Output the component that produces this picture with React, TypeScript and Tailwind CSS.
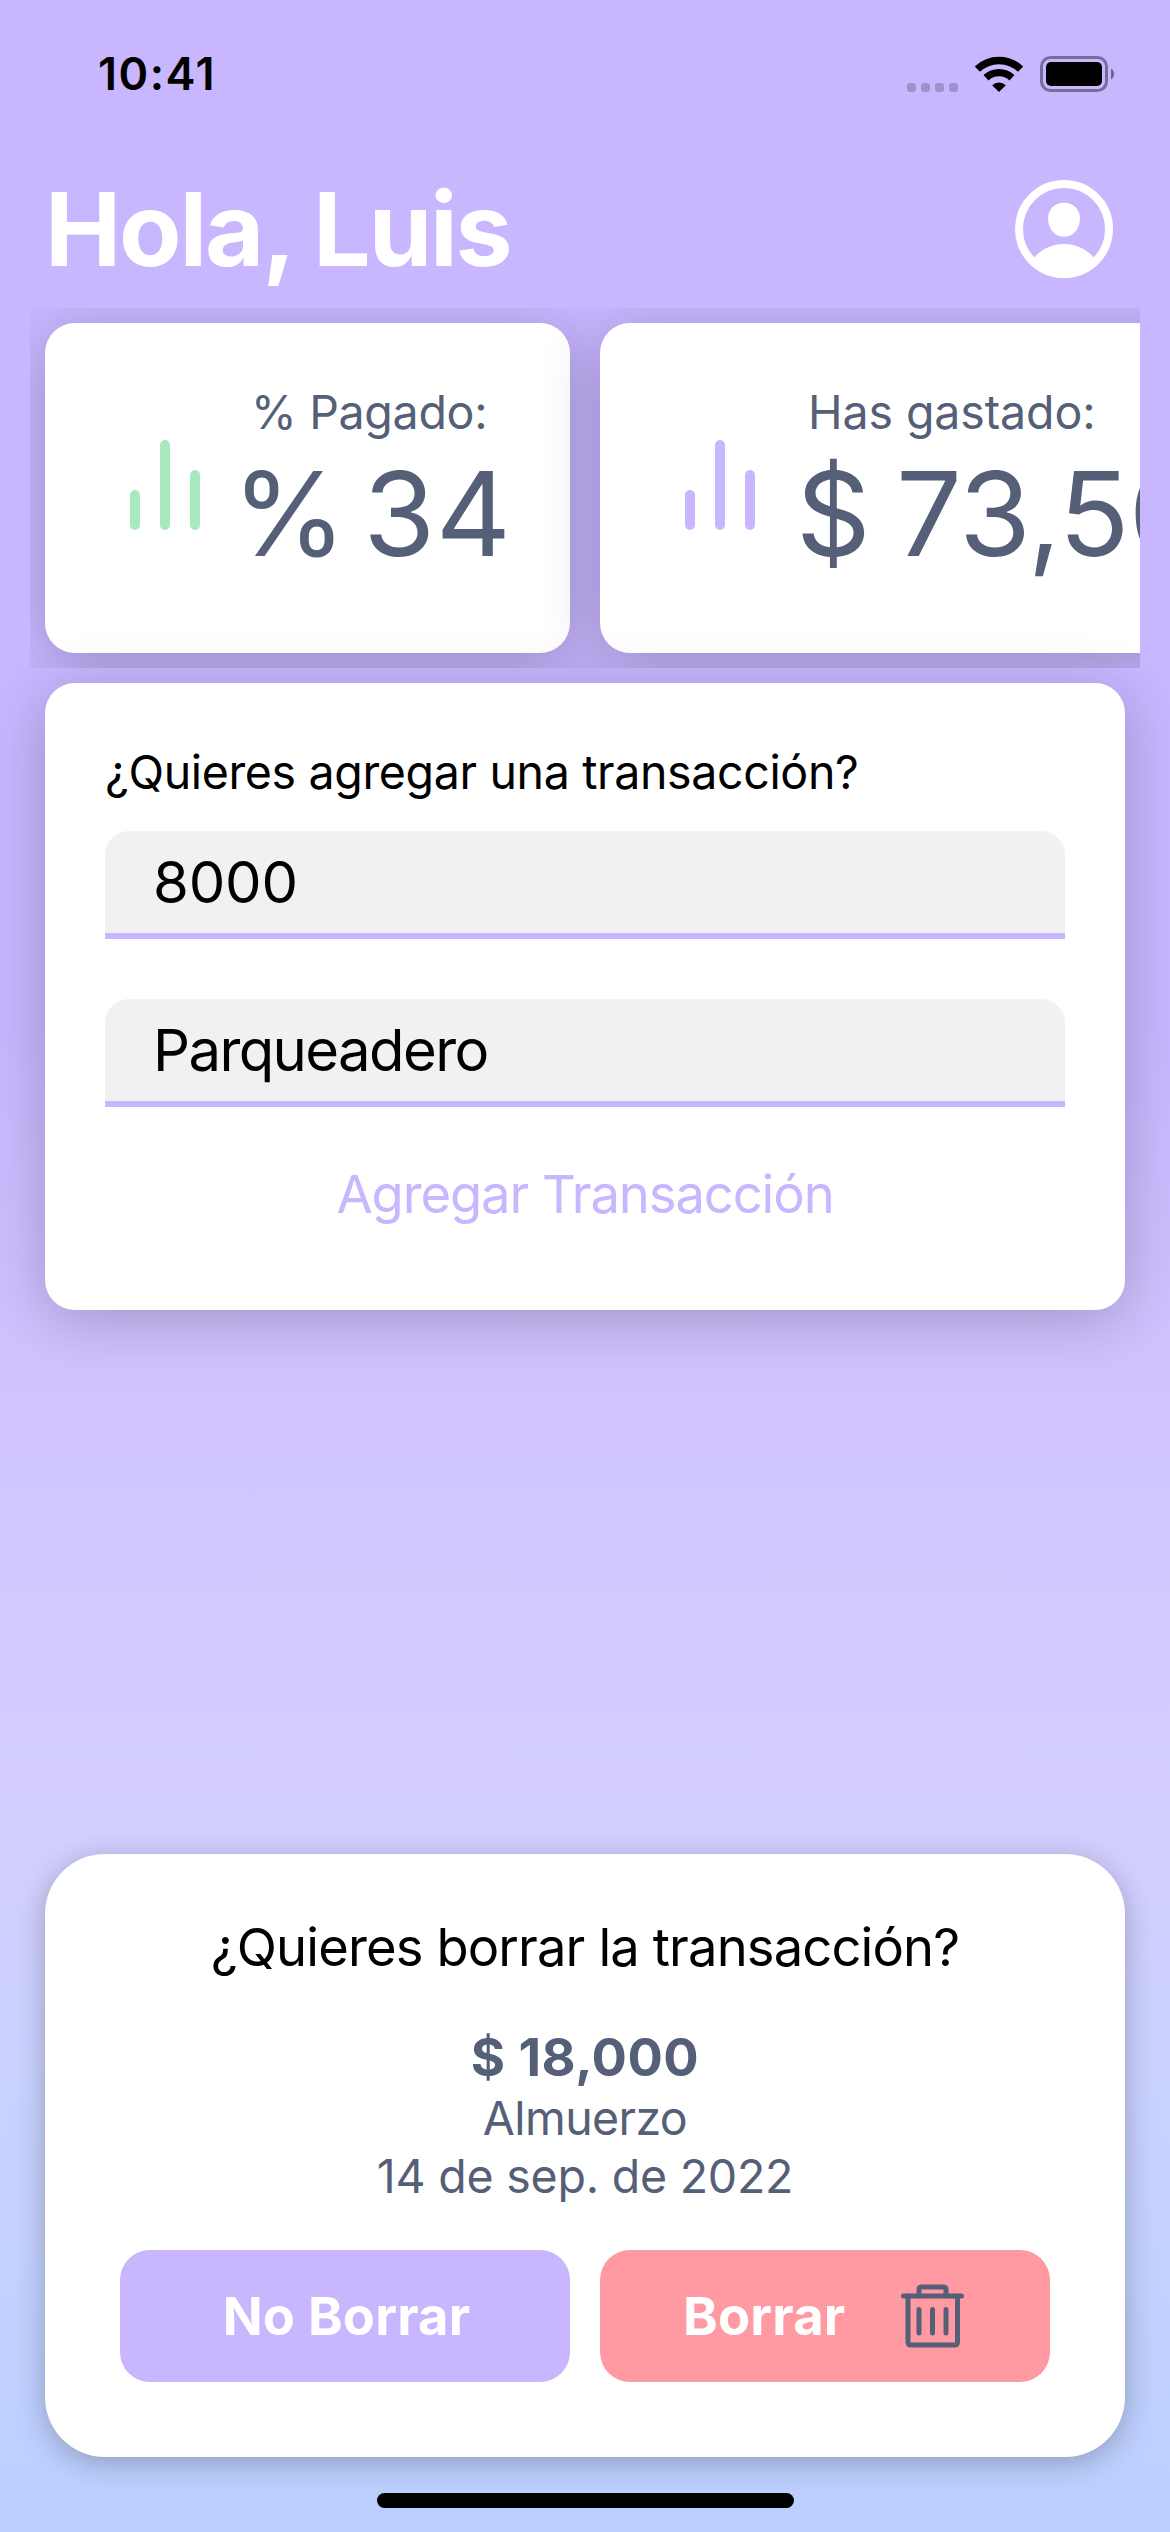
import type { ReactNode } from "react";

function StatusBar() {
  return (
    <div className="flex h-[148px] shrink-0 items-center justify-between pr-[55px] pl-[98px] text-black">
      <span className="text-[45px] font-semibold tracking-[1.5px]">10:41</span>
      <div className="flex items-center">
        <div className="mt-[26px] flex gap-[5px]">
          <span className="size-[9px] rounded-[3px] bg-black/20" />
          <span className="size-[9px] rounded-[3px] bg-black/20" />
          <span className="size-[9px] rounded-[3px] bg-black/20" />
          <span className="size-[9px] rounded-[3px] bg-black/20" />
        </div>
        <svg className="ml-[17px]" width="48" height="36" viewBox="0 0 48 36">
          <g fill="none" stroke="black" strokeWidth="7.4">
            <path d="M2.4 13.2 A31 31 0 0 1 45.6 13.2" />
            <path d="M11 21.8 A19 19 0 0 1 37 21.8" />
          </g>
          <path d="M24 36 L17.2 29.2 A9.6 9.6 0 0 1 30.8 29.2 Z" />
        </svg>
        <svg className="ml-[17px]" width="75" height="36" viewBox="0 0 75 36">
          <rect x="1.5" y="1.5" width="65" height="33" rx="9" fill="none" stroke="black" strokeOpacity="0.4" strokeWidth="3" />
          <rect x="6" y="6" width="56" height="24" rx="5" />
          <path d="M71 12.5 A6.5 6.5 0 0 1 71 23.5 Z" fillOpacity="0.45" />
        </svg>
      </div>
    </div>
  );
}

function AvatarIcon() {
  return (
    <svg width="98" height="98" viewBox="0 0 98 98" fill="white">
      <circle cx="49" cy="49" r="45" fill="none" stroke="white" strokeWidth="8" />
      <path d="M49 22.7c9.6 0 16 7 16 15.8C65 49 58 56.8 49 56.8S33 49 33 38.5C33 29.7 39.4 22.7 49 22.7Z" />
      <path d="M19.3 77.5C26.5 69 37 64 49 64S71.5 69 78.700 77.500C72 86.500 61 92 49 92S26 86.500 19.300 77.500Z" />
    </svg>
  );
}

function TrashIcon() {
  return (
    <svg width="63" height="64" viewBox="0 0 63 64" fill="none" stroke="#555f77" strokeWidth="5" strokeLinecap="round" strokeLinejoin="round">
      <path d="M2.5 12H60.5" />
      <path d="M18 12V5.5Q18 2.9 20.6 2.9H42.4Q45 2.9 45 5.5V12" />
      <path d="M7 12V58Q7 61 10 61H53.5Q56.5 61 56.5 58V12" />
      <path d="M18 25.5V49M31.500 25.500V49M45 25.500V49" />
    </svg>
  );
}

function BarsIcon({ className }: { className: string }) {
  return (
    <div className={`mt-[117px] ml-[85px] flex h-[90px] w-[70px] shrink-0 items-end justify-between ${className}`}>
      <span className="h-10 w-[10px] rounded-full bg-current" />
      <span className="h-[90px] w-[10px] rounded-full bg-current" />
      <span className="h-[60px] w-[10px] rounded-full bg-current" />
    </div>
  );
}

function StatCard({ className, label, children }: { className: string; label: ReactNode; children: ReactNode }) {
  return (
    <div className={`flex h-[330px] shrink-0 items-start rounded-[30px] bg-white shadow-[0_10px_60px_rgba(0,0,0,0.22)] ${className}`}>
      <BarsIcon className="" />
      <div className="mt-[61px] text-[#555f77]">
        <p className="h-14 text-[46.5px] leading-[56px]">{label}</p>
        <p className="mt-1 h-[140px] text-[116.5px] leading-[140px]">{children}</p>
      </div>
    </div>
  );
}

function Field({ value, className }: { value: string; className: string }) {
  return (
    <div className={`flex h-[108px] items-center rounded-t-[24px] border-b-[6px] border-[#c8b6ff] bg-[#f1f1f1] pl-12 text-[58px] ${className}`}>
      {value}
    </div>
  );
}

export default function App() {
  return (
    <div className="flex h-[2532px] w-[1170px] flex-col overflow-hidden bg-[linear-gradient(180deg,#c8b6ff_0px,#c8b6ff_1020px,#d0c1ff_1340px,#d2c9ff_1600px,#d3cfff_1830px,#cad2ff_2080px,#c1d1ff_2320px,#bbcfff_2532px)] font-['Inter',sans-serif] whitespace-nowrap">
      <StatusBar />
      <header className="flex h-[160px] shrink-0 items-center justify-between pt-[2px] pr-[57px] pl-[45px]">
        <h1 className="text-[102px] leading-none font-bold tracking-[-2.1px] text-white">Hola, Luis</h1>
        <AvatarIcon />
      </header>

      <section className="mx-[30px] flex h-[360px] shrink-0 gap-[30px] overflow-hidden p-[15px]">
        <StatCard className="w-[525px] text-[#a8e9bd]" label={<span className="ml-[51px] tracking-[-0.3px]">% Pagado:</span>}>
          <span className="ml-[32px] tracking-[-8px]">{"% "}</span>
          <span className="tracking-[0.5px]">34</span>
        </StatCard>
        <StatCard className="w-[760px] text-[#c8b6ff]" label={<span className="ml-[53px] tracking-[-0.1px]">Has gastado:</span>}>
          <span className="ml-[41px] tracking-[-0.8px] [word-spacing:-6px]">$ 73,500</span>
        </StatCard>
      </section>

      <section className="mx-[45px] mt-[15px] h-[627px] shrink-0 rounded-[30px] bg-white px-[60px] pt-[61px] text-black shadow-[0_10px_60px_rgba(0,0,0,0.22)]">
        <h2 className="h-14 text-[46.5px] leading-[56px] tracking-[-0.35px]">¿Quieres agregar una transacción?</h2>
        <Field value="8000" className="mt-[31px] tracking-[-0.2px]" />
        <Field value="Parqueadero" className="mt-[60px] tracking-[-1.6px]" />
        <button className="mt-[57px] block h-[60px] w-full text-center text-[52.5px] leading-[60px] tracking-[-1.08px] text-[#c8b6ff]">
          Agregar Transacción
        </button>
      </section>

      <section className="mx-[45px] mt-auto h-[603px] shrink-0 rounded-[60px] bg-white px-[75px] pt-[63px] text-center text-[#555f77] shadow-[0_6px_30px_rgba(0,0,0,0.25)]">
        <h2 className="h-[60px] text-[52.5px] leading-[60px] tracking-[-0.86px] text-black">¿Quieres borrar la transacción?</h2>
        <p className="mt-[50px] h-[60px] text-[52.5px] leading-[60px] font-bold tracking-[0.46px]">$ 18,000</p>
        <p className="mt-[2px] h-[58px] text-[46.5px] leading-[58px] tracking-[-0.6px]">Almuerzo</p>
        <p className="h-[58px] text-[46.5px] leading-[58px] tracking-[-0.22px]">14 de sep. de 2022</p>
        <div className="mt-[45px] flex gap-[30px] text-[52.5px] font-bold tracking-[0.2px] text-white">
          <button className="h-[132px] w-[450px] rounded-[30px] bg-[#c8b6ff] pr-[27px] pl-[30px] text-center">No Borrar</button>
          <button className="flex h-[132px] w-[450px] items-center justify-between rounded-[30px] bg-[#ff9aa2] pr-[86px] pl-[83px]">
            Borrar
            <TrashIcon />
          </button>
        </div>
      </section>

      <div className="mx-auto mt-9 mb-6 h-[15px] w-[417px] shrink-0 rounded-full bg-black" />
    </div>
  );
}
